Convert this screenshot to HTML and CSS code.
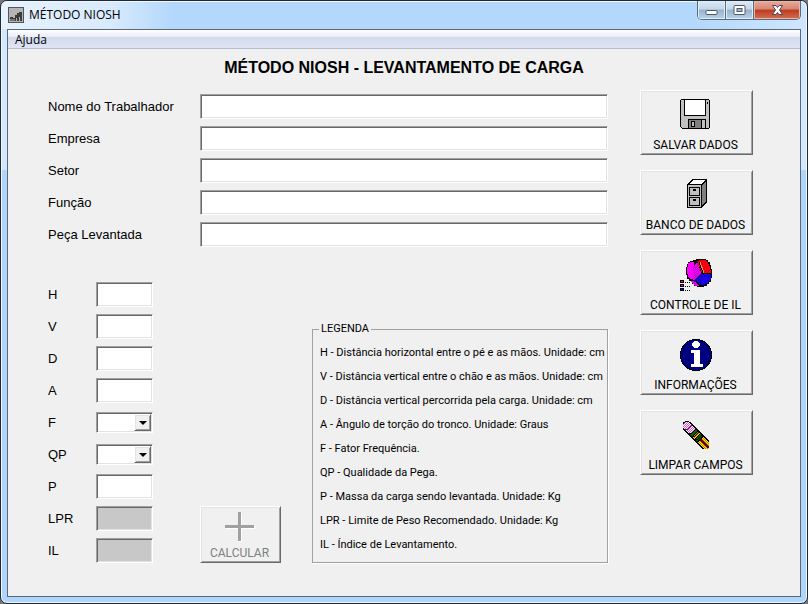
FILE: index.html
```html
<!DOCTYPE html>
<html lang="pt-BR">
<head>
<meta charset="utf-8">
<title>MÉTODO NIOSH</title>
<link rel="stylesheet" href="styles.css">
</head>
<body>
<div class="window">
  <header class="titlebar">
    <svg class="app-icon" width="16" height="16" viewBox="0 0 16 16" shape-rendering="crispEdges" aria-hidden="true">
      <rect width="16" height="16" fill="#555"/><rect x="1" y="1" width="14" height="14" fill="#b4b4b4"/>
      <path d="M2 10h3v1h2v-3h2v-2h2v-1h3v9h-2v-4h-1v4h-2v-3h-1v3h-6z" fill="#3c3c3c"/>
      <path d="M2 12h5v2h-5z" fill="#777"/>
    </svg>
    <span class="caption">MÉTODO NIOSH</span>
    <div class="window-controls">
      <button class="control" type="button" aria-label="Minimizar">
        <svg width="13" height="12" viewBox="0 0 13 12"><rect x="1" y="6.500" width="11" height="4" rx="1" fill="#fff" stroke="#50586a"/></svg>
      </button>
      <button class="control" type="button" aria-label="Maximizar">
        <svg width="13" height="12" viewBox="0 0 13 12"><rect x="1" y="1.500" width="11" height="9" rx="1" fill="#fff" stroke="#50586a"/><rect x="4" y="4.500" width="5" height="3" fill="#9fb8d4" stroke="#50586a"/></svg>
      </button>
      <button class="control control-close" type="button" aria-label="Fechar">
        <svg width="13" height="12" viewBox="0 0 13 12"><path d="M1.500 1.500h3.500l1.500 2 1.500-2h3.500l-3 4.500 3 4.500h-3.500l-1.500-2-1.500 2h-3.500l3-4.500z" fill="#fff" stroke="#50465a"/></svg>
      </button>
    </div>
  </header>
  <div class="client">
    <nav class="menubar"><button class="menu-item" type="button">Ajuda</button></nav>
    <main class="content">
      <h1 class="heading">MÉTODO NIOSH - LEVANTAMENTO DE CARGA</h1>
      <form class="form">
        <div class="person">
          <label for="nome">Nome do Trabalhador</label><input class="sunken" id="nome" type="text">
          <label for="empresa">Empresa</label><input class="sunken" id="empresa" type="text">
          <label for="setor">Setor</label><input class="sunken" id="setor" type="text">
          <label for="funcao">Função</label><input class="sunken" id="funcao" type="text">
          <label for="peca">Peça Levantada</label><input class="sunken" id="peca" type="text">
        </div>
        <div class="calculation">
          <div class="params">
            <label for="h">H</label><input class="sunken" id="h" type="text">
            <label for="v">V</label><input class="sunken" id="v" type="text">
            <label for="d">D</label><input class="sunken" id="d" type="text">
            <label for="a">A</label><input class="sunken" id="a" type="text">
            <label for="f">F</label><div class="combo"><select class="sunken" id="f"><option></option></select><span class="arrow raised"></span></div>
            <label for="qp">QP</label><div class="combo"><select class="sunken" id="qp"><option></option></select><span class="arrow raised"></span></div>
            <label for="p">P</label><input class="sunken" id="p" type="text">
            <label for="lpr">LPR</label><input class="sunken" id="lpr" type="text" readonly>
            <label for="il">IL</label><input class="sunken" id="il" type="text" readonly>
          </div>
          <button class="tool calculate raised" type="button" disabled>
            <svg width="32" height="32" viewBox="0 0 32 32" shape-rendering="crispEdges" aria-hidden="true">
              <path d="M15 2h3v13h13v3h-13v13h-3v-13h-13v-3h13z" fill="#fff"/>
              <path d="M14 1h3v13h13v3h-13v13h-3v-13h-13v-3h13z" fill="#a0a0a0"/>
            </svg>
            <span>CALCULAR</span>
          </button>
          <fieldset class="legend">
            <legend>LEGENDA</legend>
            <ul>
              <li>H - Distância horizontal entre o pé e as mãos. Unidade: cm</li>
              <li>V - Distância vertical entre o chão e as mãos. Unidade: cm</li>
              <li>D - Distância vertical percorrida pela carga. Unidade: cm</li>
              <li>A - Ângulo de torção do tronco. Unidade: Graus</li>
              <li>F - Fator Frequência.</li>
              <li>QP - Qualidade da Pega.</li>
              <li>P - Massa da carga sendo levantada. Unidade: Kg</li>
              <li>LPR - Limite de Peso Recomendado. Unidade: Kg</li>
              <li>IL - Índice de Levantamento.</li>
            </ul>
          </fieldset>
        </div>
      </form>
      <aside class="actions">
        <button class="tool raised" type="button">
          <svg width="32" height="32" viewBox="0 0 32 32" shape-rendering="crispEdges" aria-hidden="true">
            <path d="M1 0h28v1h1v28h-1v1h-27v-1h-1v-1h-1v-27h1z" fill="#000"/>
            <path d="M1 1h28v28h-27v-1h-1z" fill="#c0c0c0"/>
            <path d="M4 0h22v17h-22z" fill="#000"/><path d="M5 1h20v15h-20z" fill="#fff"/>
            <path d="M27 3h1v2h-1z" fill="#000"/>
            <path d="M8 20h18v10h-18z" fill="#000"/><path d="M9 21h12v8h-12z" fill="#808080"/><path d="M22 21h3v8h-3z" fill="#c0c0c0"/>
            <path d="M11 22h4v6h-4z" fill="#000"/><path d="M12 23h2v4h-2z" fill="#c0c0c0"/>
          </svg>
          <span>SALVAR DADOS</span>
        </button>
        <button class="tool raised" type="button">
          <svg width="32" height="32" viewBox="0 0 32 32" shape-rendering="crispEdges" aria-hidden="true">
            <path d="M7 5l5-5h15v23l-5 6h-15z" fill="#000"/>
            <path d="M9 5l4-4h12l-4 4z" fill="#fff"/>
            <path d="M22 6l4-4v20l-4 5z" fill="#808080"/>
            <path d="M8 6h13v22h-13z" fill="#c0c0c0"/>
            <path d="M9 8h11v9h-11zM9 18h11v9h-11z" fill="#000"/>
            <path d="M10 9h9v7h-9zM10 19h9v7h-9z" fill="#c0c0c0"/>
            <path d="M13 10h3v2h-3zM13 20h3v2h-3z" fill="#000"/>
          </svg>
          <span>BANCO DE DADOS</span>
        </button>
        <button class="tool raised" type="button">
          <svg width="32" height="32" viewBox="0 0 32 32" shape-rendering="crispEdges" aria-hidden="true">
            <defs>
              <pattern id="violet" width="2" height="2" patternUnits="userSpaceOnUse"><path d="M0 0h2v2h-2z" fill="#f0f"/><path d="M0 0h1v1h-1zM1 1h1v1h-1z" fill="#b010c0"/></pattern>
              <pattern id="blue" width="2" height="2" patternUnits="userSpaceOnUse"><path d="M0 0h2v2h-2z" fill="#00f"/><path d="M0 0h1v1h-1zM1 1h1v1h-1z" fill="#3000c0"/></pattern>
              <pattern id="red" width="2" height="2" patternUnits="userSpaceOnUse"><path d="M0 0h2v2h-2z" fill="#f00"/><path d="M0 0h1v1h-1zM1 1h1v1h-1z" fill="#e80018"/></pattern>
            </defs>
            <path d="M14 1h2v-1h10v1h2v2h2v3h1v4h1v9h-1v4h-2v2h-2v2h-3v1h-7v-1h-3v-2h-2v-3h-3v-2h-2v-4h-1v-8h1v-3h1v-2h2v-1h2z" fill="#000"/>
            <path d="M8 4h2v-1h4v3l-1 3v9l1 2h-4l-2-2v-3h-1v-7h1z" fill="#f0f"/>
            <path d="M16 4h2l1 4 3 7-7 6h-2v-13z" fill="url(#violet)"/>
            <path d="M15 2h4v-1h6l3 3 2 4 1 6h-9l-5-12h-2z" fill="url(#red)"/>
            <path d="M19 3l4 11" stroke="#000"/><path d="M20 3l4 11" stroke="#f08060"/>
            <path d="M23 15h8v5l-3 4-4 2h-4l-4-4z" fill="url(#blue)"/>
            <path d="M11 22h3l5 5h-3l-3-2z" fill="url(#violet)"/>
            <path d="M14 23l8-8" stroke="#20a" stroke-width="2"/>
            <path d="M0 21h4v3h-4zM0 25h4v3h-4zM0 29h4v3h-4z" fill="#000"/>
            <path d="M1 22h2v1h-2z" fill="#f00"/><path d="M1 26h2v1h-2z" fill="#f0f"/><path d="M1 30h2v1h-2z" fill="#00f"/>
            <path d="M5 23h1v1h-1zM7 23h1v1h-1zM9 23h1v1h-1zM5 27h1v1h-1zM7 27h1v1h-1zM9 27h1v1h-1zM5 31h1v1h-1zM7 31h1v1h-1zM9 31h1v1h-1z" fill="#000"/>
          </svg>
          <span>CONTROLE DE IL</span>
        </button>
        <button class="tool raised" type="button">
          <svg width="32" height="32" viewBox="0 0 32 32" shape-rendering="crispEdges" aria-hidden="true">
            <circle cx="16" cy="16" r="16" fill="#000"/><circle cx="16" cy="16" r="15" fill="#000080"/>
            <path d="M14 2h4v1h1v1h1v3h-1v1h-1v1h-4v-1h-1v-1h-1v-3h1v-1h1z" fill="#fff"/>
            <path d="M11 11h9v14h3v3h-12v-3h3v-11h-3z" fill="#fff"/>
          </svg>
          <span>INFORMAÇÕES</span>
        </button>
        <button class="tool raised" type="button">
          <svg width="32" height="32" viewBox="0 0 32 32" shape-rendering="crispEdges" aria-hidden="true">
            <defs>
              <pattern id="pink" width="2" height="2" patternUnits="userSpaceOnUse"><path d="M0 0h2v2h-2z" fill="#fff"/><path d="M0 0h1v1h-1zM1 1h1v1h-1z" fill="#e850e8"/></pattern>
              <pattern id="gold" width="2" height="2" patternUnits="userSpaceOnUse"><path d="M0 0h2v2h-2z" fill="#fd0"/><path d="M0 0h1v1h-1zM1 1h1v1h-1z" fill="#b88a00"/></pattern>
              <clipPath id="pencil"><path d="M3 2h26v28h-26z"/></clipPath>
            </defs>
            <g clip-path="url(#pencil)" fill="none">
              <circle cx="7" cy="7" r="5" fill="#000"/>
              <path d="M7 7l26 26" stroke="#000" stroke-width="10"/>
              <path d="M7 7l6 6" stroke="url(#pink)" stroke-width="8"/>
              <circle cx="7" cy="7" r="4" fill="url(#pink)"/>
              <path d="M5 11l3-1 3-3 0-2" stroke="#402040"/>
              <path d="M13 13l2 2M18 18l2 2" stroke="#006400" stroke-width="8"/>
              <path d="M15.500 15.500l2 2M21 21l12 12" stroke="url(#gold)" stroke-width="8"/>
              <path d="M9 15l3-1 3-3 0-2M12 18l3-1 3-3 0-2M15 21l3-1 3-3 0-2" stroke="#200"/>
              <path d="M20 20l9 9" stroke="#600000" stroke-width="2"/>
            </g>
          </svg>
          <span>LIMPAR CAMPOS</span>
        </button>
      </aside>
    </main>
  </div>
</div>
</body>
</html>
```
FILE: styles.css
```css
* { box-sizing: border-box; }

body {
  margin: 0;
  background: #777;
  color: #000;
  font-family: "Liberation Sans", Arial, sans-serif;
  font-size: 13px;
}

button, input, select { font: inherit; color: inherit; }

.window {
  display: flex;
  flex-direction: column;
  min-height: 100vh;
  padding: 0 6px 6px;
  border: 1px solid #202a36;
  border-radius: 7px;
  background: linear-gradient(#d3e8fd 0, #d3e8fd 169px, #b0d5fb 169px);
  box-shadow: inset 0 0 0 1px #eef7ff;
}

.titlebar {
  display: flex;
  align-items: flex-start;
  height: 28px;
  margin: 0 -5px;
  padding: 0 5px 0 6px;
  border-radius: 6px 6px 0 0;
  background: linear-gradient(90deg, #e6f2fe, #d8eafd 110px, #b4d8fb 170px, #b4d8fb 86%, #cfe6fd);
  box-shadow: inset 0 1px #eef7ff;
}

.app-icon { margin-top: 6px; }

.caption {
  margin: 5px auto 0 5px;
  font-family: "Open Sans", "Segoe UI", sans-serif;
  font-size: 12px;
  line-height: 18px;
}

.window-controls {
  display: flex;
  height: 19px;
  overflow: hidden;
  border: 1px solid #596b80;
  border-top: 0;
  border-radius: 0 0 5px 5px;
}

.control {
  display: flex;
  align-items: center;
  justify-content: center;
  width: 28px;
  padding: 0;
  border: 0;
  border-right: 1px solid #596b80;
  background: linear-gradient(#dce9f6 0, #c4d6e8 45%, #98b2cc 50%, #b8d2ea);
  box-shadow: inset 0 0 0 1px #dfeefb;
}

.control-close {
  width: 46px;
  border-right: 0;
  background: linear-gradient(#e9aa9a 0, #d88572 45%, #bc3a20 50%, #d27050);
  box-shadow: inset 0 0 0 1px #f0b4a4;
}

.client {
  display: flex;
  flex: 1;
  flex-direction: column;
  border: 1px solid #59697b;
  background: #f0f0f0;
}

.menubar {
  height: 19px;
  border-bottom: 1px solid #b4bcd0;
  background: linear-gradient(#fff 0, #e9edf6 40%, #d3daed 41%, #dfe4f3);
}

.menu-item {
  display: block;
  padding: 0 7px;
  border: 0;
  background: none;
  font-family: "Open Sans", "Segoe UI", sans-serif;
  font-size: 12px;
  line-height: 20px;
}

.content {
  display: grid;
  grid-template-columns: 1fr 113px;
  column-gap: 32px;
  padding: 10px 47px 33px 40px;
}

.heading {
  grid-column: 1 / -1;
  margin: 0 -7px 13px 0;
  font-size: 16px;
  line-height: 18px;
  text-align: center;
}

.form { padding-top: 4px; }

.person {
  display: grid;
  grid-template-columns: 152px 1fr;
  grid-auto-rows: 25px;
  row-gap: 7px;
  align-items: center;
  margin-bottom: 35px;
}

.calculation {
  display: grid;
  grid-template-columns: 152px 112px 1fr;
  align-items: end;
}

.params {
  display: grid;
  grid-template-columns: 48px 57px;
  grid-auto-rows: 25px;
  row-gap: 7px;
  align-items: center;
}

.sunken {
  width: 100%;
  height: 25px;
  padding: 0 3px;
  border: 1px solid;
  border-color: #a0a0a0 #fff #fff #a0a0a0;
  border-radius: 0;
  outline: 0;
  background: #fff;
  box-shadow: inset 1px 1px #696969, inset -1px -1px #e3e3e3;
}

.sunken:read-only:not(select) { background: #c8c8c8; }

.raised {
  border: 1px solid;
  border-color: #fff #696969 #696969 #fff;
  background: #f0f0f0;
  box-shadow: inset 1px 1px #e3e3e3, inset -1px -1px #a0a0a0;
}

.combo { position: relative; height: 21px; }

.combo select { display: block; height: 21px; appearance: none; }

.arrow {
  position: absolute;
  top: 2px;
  right: 2px;
  display: flex;
  align-items: center;
  justify-content: center;
  width: 17px;
  height: 17px;
  pointer-events: none;
}

.arrow::before {
  content: "";
  border: 4px solid transparent;
  border-top-color: #000;
  border-bottom: 0;
}

.tool {
  display: flex;
  flex-direction: column;
  align-items: center;
  justify-content: flex-end;
  height: 65px;
  padding: 0 2px 1px 0;
  font-family: Roboto, "Liberation Sans", sans-serif;
  font-size: 12px;
  line-height: 15px;
  white-space: nowrap;
}

.tool svg { display: block; margin-bottom: 7px; }

.calculate {
  width: 81px;
  height: 57px;
  color: #808080;
}

.calculate svg { margin-bottom: 3px; }

.legend {
  min-width: 0;
  margin: 0;
  padding: 0 0 5px 7px;
  border: 1px solid #a0a0a0;
  font-family: Roboto, "Liberation Sans", sans-serif;
  font-size: 11px;
  box-shadow: 1px 1px #fff;
}

.legend legend {
  margin-left: -1px;
  padding: 0 2px;
  line-height: 12px;
}

.legend ul {
  margin: 0;
  padding: 6px 0 0;
  list-style: none;
}

.legend li { line-height: 24px; white-space: nowrap; }

.actions {
  display: flex;
  flex-direction: column;
  gap: 15px;
}
```
